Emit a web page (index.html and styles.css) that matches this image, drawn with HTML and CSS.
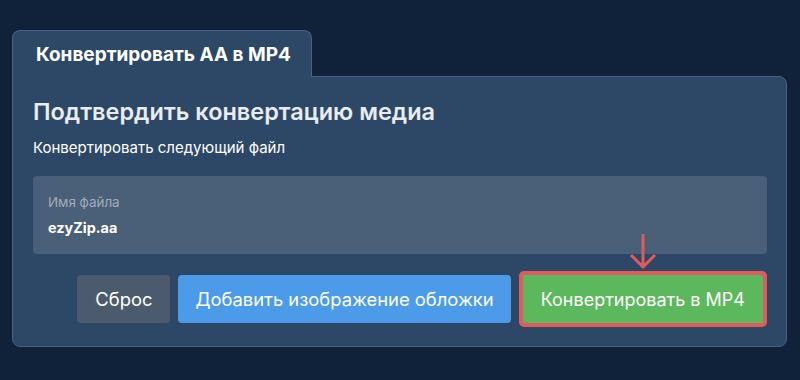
FILE: index.html
```html
<!DOCTYPE html>
<html lang="ru">
<head>
<meta charset="utf-8">
<title>Конвертировать AA в MP4</title>
<link rel="stylesheet" href="styles.css">
</head>
<body>
<div class="page">
  <div class="tab">Конвертировать АА в MP4</div>
  <div class="panel">
    <h1 class="title">Подтвердить конвертацию медиа</h1>
    <p class="subtitle">Конвертировать следующий файл</p>
    <div class="field">
      <div class="field-label">Имя файла</div>
      <div class="field-value">ezyZip.aa</div>
    </div>
    <div class="actions">
      <button class="btn btn-reset">Сброс</button>
      <button class="btn btn-cover">Добавить изображение обложки</button>
      <div class="convert-wrap">
        <svg class="arrow" width="32" height="37" viewBox="0 0 32 37" aria-hidden="true">
          <path d="M16 1 V34 M4 22 L16 34 L28 22" fill="none" stroke="#e05c5c" stroke-width="3" stroke-linecap="butt"/>
        </svg>
        <button class="btn btn-convert">Конвертировать в MP4</button>
      </div>
    </div>
  </div>
</div>
</body>
</html>
```
FILE: styles.css
```css
* { box-sizing: border-box; }
html, body { margin: 0; padding: 0; }
body {
  background: #10223a;
  font-family: Inter, "Noto Sans", "Liberation Sans", sans-serif;
  color: #ffffff;
}
.page {
  padding: 30px 13px 0 12px;
}
.tab {
  display: inline-block;
  position: relative;
  z-index: 1;
  width: 300px;
  height: 47px;
  margin-bottom: -1px;
  padding: 12px 0 0 23px;
  background: #2d4867;
  border: 1px solid #4a6180;
  border-bottom: none;
  border-radius: 8px 8px 0 0;
  font-size: 19px;
  font-weight: 700;
  line-height: 24px;
  color: #ffffff;
  white-space: nowrap;
}
.panel {
  background: #2d4867;
  border: 1px solid #4a6180;
  border-radius: 0 8px 8px 8px;
  padding: 19px 19px 19px 20px;
}
.title {
  margin: 0;
  font-size: 23.5px;
  line-height: 32px;
  font-weight: 600;
  color: #e9ecf1;
}
.subtitle {
  margin: 10px 0 0;
  font-size: 15px;
  line-height: 20px;
  color: #ffffff;
}
.field {
  margin-top: 18px;
  background: #4a5f78;
  border-radius: 4px;
  padding: 17px 15px 15px;
}
.field-label {
  font-size: 13.4px;
  line-height: 18px;
  color: #a3adba;
}
.field-value {
  margin-top: 6px;
  font-size: 14.4px;
  line-height: 22px;
  font-weight: 700;
  color: #ffffff;
}
.actions {
  margin-top: 17px;
  display: flex;
  justify-content: flex-end;
  align-items: center;
  gap: 8px;
}
.btn {
  height: 48px;
  padding: 0 17px;
  border: none;
  border-radius: 4px;
  font-family: inherit;
  font-size: 18.4px;
  color: #ffffff;
  cursor: pointer;
}
.btn-reset { background: #4b5b6d; padding: 0 18px; }
.btn-cover { background: #4b9be8; }
.convert-wrap {
  position: relative;
  display: flex;
}
.btn-convert {
  height: 56px;
  font-size: 18px;
  background: #5cb85c;
  border: 4px solid #e05c5c;
  border-radius: 5px;
  padding: 0 18px;
}
.arrow {
  position: absolute;
  left: 50%;
  top: -38px;
  transform: translateX(-50%);
}
```
